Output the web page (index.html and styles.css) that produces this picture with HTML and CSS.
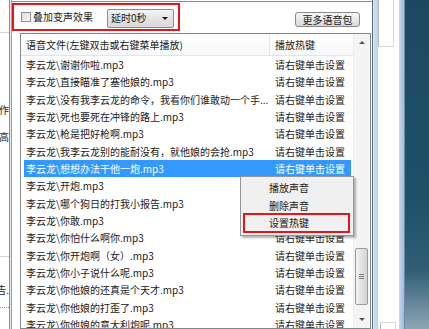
FILE: index.html
```html
<!DOCTYPE html>
<html lang="zh-CN">
<head>
    <meta charset="UTF-8">
    <title>语音包设置</title>
    <link rel="stylesheet" href="styles.css">
</head>
<body>

    <div class="screen">

        <!-- 左侧被遮挡的窗口 -->
        <div class="side-win">
            <div class="side-top"></div>
            <div class="side-line first">个操作</div>
            <div class="side-line">最高</div>
            <div class="side-rule"></div>
            <div class="side-line last">报告.</div>
            <div class="side-blue"></div>
        </div>
        <div class="win-edge"></div>

        <div class="dialog">
            <div class="toolbar">
                <div class="mark-box">
                    <span class="check"></span>
                    <span class="check-label">叠加变声效果</span>
                    <div class="select">
                        <span>延时0秒</span>
                        <span class="select-arrow"></span>
                    </div>
                </div>
                <button class="more-btn">更多语音包</button>
            </div>

            <div class="listbox">
                <div class="list-main">
                    <div class="list-head">
                        <div class="col-name">语音文件(左键双击或右键菜单播放)</div>
                        <div class="col-key">播放热键</div>
                    </div>
                    <div class="rows">
                        <div class="row"><div class="col-name">李云龙\谢谢你啦.mp3</div><div class="col-key">请右键单击设置</div></div>
                        <div class="row"><div class="col-name">李云龙\直接瞄准了塞他娘的.mp3</div><div class="col-key">请右键单击设置</div></div>
                        <div class="row"><div class="col-name">李云龙\没有我李云龙的命令，我看你们谁敢动一个手...</div><div class="col-key">请右键单击设置</div></div>
                        <div class="row"><div class="col-name">李云龙\死也要死在冲锋的路上.mp3</div><div class="col-key">请右键单击设置</div></div>
                        <div class="row"><div class="col-name">李云龙\枪是把好枪啊.mp3</div><div class="col-key">请右键单击设置</div></div>
                        <div class="row"><div class="col-name">李云龙\我李云龙别的能耐没有，就他娘的会抢.mp3</div><div class="col-key">请右键单击设置</div></div>
                        <div class="row selected"><div class="col-name">李云龙\想想办法干他一炮.mp3</div><div class="col-key">请右键单击设置</div></div>
                        <!-- 下面三行的热键列被右键菜单盖住 -->
                        <div class="row"><div class="col-name">李云龙\开炮.mp3</div><div class="col-key"></div></div>
                        <div class="row"><div class="col-name">李云龙\哪个狗日的打我小报告.mp3</div><div class="col-key"></div></div>
                        <div class="row"><div class="col-name">李云龙\你敢.mp3</div><div class="col-key"></div></div>
                        <div class="row"><div class="col-name">李云龙\你怕什么啊你.mp3</div><div class="col-key">请右键单击设置</div></div>
                        <div class="row"><div class="col-name">李云龙\你开炮啊（女）.mp3</div><div class="col-key">请右键单击设置</div></div>
                        <div class="row"><div class="col-name">李云龙\你小子说什么呢.mp3</div><div class="col-key">请右键单击设置</div></div>
                        <div class="row"><div class="col-name">李云龙\你他娘的还真是个天才.mp3</div><div class="col-key">请右键单击设置</div></div>
                        <div class="row"><div class="col-name">李云龙\你他娘的打歪了.mp3</div><div class="col-key">请右键单击设置</div></div>
                        <div class="row"><div class="col-name">李云龙\你他娘的意大利炮呢.mp3</div><div class="col-key">请右键单击设置</div></div>
                    </div>
                </div>

                <div class="vscroll">
                    <div class="sb-btn"><span class="arrow-up"></span></div>
                    <div class="sb-track">
                        <div class="sb-thumb">
                            <span class="grip"></span>
                        </div>
                    </div>
                    <div class="sb-btn"><span class="arrow-down"></span></div>
                </div>
            </div>

            <!-- 右键菜单 -->
            <div class="ctx-menu">
                <div class="menu-item">播放声音</div>
                <div class="menu-item">删除声音</div>
                <div class="menu-item marked">设置热键</div>
            </div>
        </div>

        <div class="glass"></div>
        <div class="back-win">
            <div class="back-box"></div>
            <div class="back-box bottom"></div>
        </div>
        <div class="glass right"></div>
        <div class="desktop"></div>
    </div>

</body>
</html>
```

FILE: styles.css
```css
body {
    margin: 0;
    font-family: "Noto Sans CJK SC", "Noto Sans", sans-serif;
    font-size: 10px;
    color: #1a1a1a;
    background-color: #ffffff;
}

.screen {
    display: flex;
    width: 429px;
    height: 329px;
    overflow: hidden;
}

/* 左边的窗口 */
.side-win {
    width: 9px;
    flex-shrink: 0;
    background-color: #ffffff;
    overflow: hidden;
}

.side-top {
    height: 32px;
    border-bottom: 1px solid #d6d6d6;
}

.side-line {
    display: flex;
    justify-content: flex-end;
    white-space: nowrap;
    line-height: 14px;
    margin-top: 13px;
}

.side-line.first {
    margin-top: 70px;
}

.side-rule {
    height: 112px;
    border-bottom: 1px solid #d6d6d6;
}

.side-line.last {
    margin-top: 26px;
}

.side-blue {
    margin-top: 10px;
    height: 8px;
    border-top: 1px dotted #6b9ad6;
}

.win-edge {
    width: 3px;
    flex-shrink: 0;
    border-left: 1px solid #8c8c8c;
    border-right: 1px solid #a0a0a0;
    box-sizing: border-box;
    background-color: #e8e8e8;
}

/* 对话框 */
.dialog {
    position: relative;
    width: 360px;
    flex-shrink: 0;
    background-color: #ffffff;
    border-top: 1px solid #8e8e8e;
    margin-top: 1px;
}

.toolbar {
    display: flex;
    align-items: flex-start;
    height: 31px;
}

.mark-box {
    display: flex;
    align-items: center;
    margin-top: 1px;
    width: 168px;
    height: 28px;
    box-sizing: border-box;
    border: 2px solid #e8141b;
    padding-left: 7px;
}

.check {
    width: 10px;
    height: 10px;
    box-sizing: border-box;
    border: 1px solid #8f8f8f;
    background: linear-gradient(135deg, #dcdcdc, #f6f6f6);
    margin-top: -1px;
}

.check-label {
    margin-left: 2px;
    line-height: 14px;
}

.select {
    display: flex;
    align-items: center;
    justify-content: space-between;
    margin-left: 14px;
    margin-top: 2px;
    width: 67px;
    height: 19px;
    box-sizing: border-box;
    padding: 0 5px 0 3px;
    border: 1px solid #8b8b8b;
    border-radius: 2px;
    background: linear-gradient(#f4f4f4, #e4e4e4 50%, #d9d9d9);
    line-height: 14px;
}

.select-arrow {
    width: 0;
    height: 0;
    border-left: 3px solid transparent;
    border-right: 3px solid transparent;
    border-top: 3px solid #1a1a1a;
}

.more-btn {
    margin: 10px 12px 0 auto;
    width: 65px;
    height: 15px;
    padding: 0;
    font-family: inherit;
    font-size: 10px;
    line-height: 13px;
    color: #1a1a1a;
    border: 1px solid #8a8a8a;
    border-radius: 3px;
    background: linear-gradient(#f6f6f6, #e8e8e8 50%, #d8d8d8);
}

/* 列表 */
.listbox {
    display: flex;
    margin-left: 8px;
    width: 351px;
    height: 296px;
    box-sizing: border-box;
    border: 1px solid #828790;
    overflow: hidden;
}

.list-main {
    flex: 1;
    min-width: 0;
}

.list-head {
    display: flex;
    height: 21px;
    border-bottom: 1px solid #e5e5e5;
    background: linear-gradient(#ffffff, #f7f8fa);
    line-height: 21px;
}

.list-head .col-name {
    border-right: 1px solid #e3e8ee;
}

.col-name {
    width: 249px;
    flex-shrink: 0;
    box-sizing: border-box;
    padding: 0 1px 0 5px;
    white-space: nowrap;
    overflow: hidden;
}

.col-key {
    padding-left: 5px;
    white-space: nowrap;
}

.row {
    display: flex;
    height: 17.35px;
    line-height: 17px;
}

.row.selected {
    background-color: #3399ff;
    color: #ffffff;
    margin: 0 2px 0 3px;
}

.row.selected .col-name {
    width: 246px;
    padding-left: 2px;
}

/* 滚动条 */
.vscroll {
    display: flex;
    flex-direction: column;
    width: 16px;
    flex-shrink: 0;
    background-color: #f4f4f4;
    border-left: 1px solid #ececec;
}

.sb-btn {
    display: flex;
    align-items: center;
    justify-content: center;
    height: 17px;
}

.arrow-up,
.arrow-down {
    width: 0;
    height: 0;
    border-left: 3px solid transparent;
    border-right: 3px solid transparent;
}

.arrow-up {
    border-bottom: 3px solid #555555;
}

.arrow-down {
    border-top: 3px solid #555555;
}

.sb-track {
    flex: 1;
}

.sb-thumb {
    display: flex;
    align-items: center;
    justify-content: center;
    margin: 197px 2px 0 1px;
    height: 57px;
    box-sizing: border-box;
    border: 1px solid #9b9b9b;
    border-radius: 2px;
    background: linear-gradient(to right, #f3f3f3, #e2e2e2 50%, #d4d4d4);
}

.grip {
    width: 5px;
    height: 5px;
    border-top: 1px solid #7d7d7d;
    border-bottom: 1px solid #7d7d7d;
    box-sizing: border-box;
    background: linear-gradient(transparent 1px, #7d7d7d 1px, #7d7d7d 2px, transparent 2px);
}

/* 右键菜单 */
.ctx-menu {
    position: absolute;
    left: 228px;
    top: 174px;
    width: 114px;
    box-sizing: border-box;
    padding: 2px 0 2px;
    background-color: #f0f0f0;
    border: 1px solid #979797;
    box-shadow: 2px 2px 2px rgba(0, 0, 0, 0.3);
}

.menu-item {
    height: 17.5px;
    line-height: 17px;
    padding-left: 28px;
}

.menu-item.marked {
    margin: -1px 3px 0 2px;
    height: 20px;
    box-sizing: border-box;
    border: 2px solid #e8141b;
    line-height: 16px;
    padding-left: 24px;
}

/* 右侧窗口边框和桌面 */
.glass {
    width: 6px;
    flex-shrink: 0;
    border-left: 1px solid #5d6f85;
    box-sizing: border-box;
    background: linear-gradient(to right, #d5e3f2, #bcd2ea);
}

.glass.right {
    border-left: 1px solid #c9d8e8;
    border-right: 1px solid #6f8aa6;
    background: linear-gradient(to right, #bcd2ea, #9fbcdc);
}

.back-win {
    width: 21px;
    flex-shrink: 0;
    background-color: #ffffff;
    display: flex;
    flex-direction: column;
    justify-content: space-between;
}

.back-box {
    width: 14px;
    height: 46px;
    border: 1px solid #d8d8d8;
    border-left-color: #b8b8b8;
    border-top: none;
}

.back-box.bottom {
    height: 6px;
    margin-left: 2px;
    border-top: 1px solid #d8d8d8;
    border-bottom: none;
}

.desktop {
    flex: 1;
    background: linear-gradient(#1c4962, #1f5068 60%, #2f5e75 82%, #8ea6b4);
}
```
